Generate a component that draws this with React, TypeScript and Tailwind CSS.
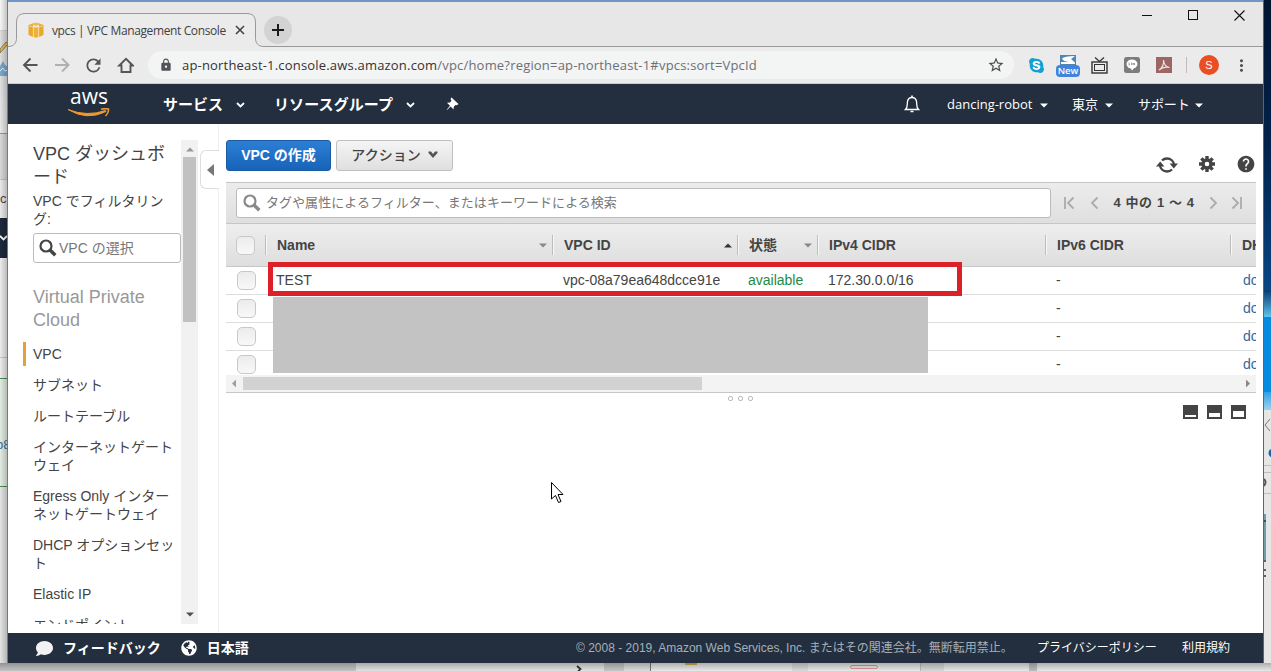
import type { ReactNode } from 'react';
import { FaComment, FaGlobeAmericas, FaSkype } from 'react-icons/fa';
import { MdLock, MdMoreVert, MdRefresh, MdStarBorder, MdHelp } from 'react-icons/md';

const SIDEBAR_ITEMS = [
  'サブネット',
  'ルートテーブル',
  'インターネットゲートウェイ',
  'Egress Only インターネットゲートウェイ',
  'DHCP オプションセット',
  'Elastic IP',
  'エンドポイント',
];

interface Vpc {
  name: string;
  id: string;
  state: string;
  ipv4: string;
  ipv6: string;
  dhcp: string;
}

const VPCS: Vpc[] = [
  { name: 'TEST', id: 'vpc-08a79ea648dcce91e', state: 'available', ipv4: '172.30.0.0/16', ipv6: '-', dhcp: 'dopt' },
  { name: '', id: '', state: '', ipv4: '', ipv6: '-', dhcp: 'dopt' },
  { name: '', id: '', state: '', ipv4: '', ipv6: '-', dhcp: 'dopt' },
  { name: '', id: '', state: '', ipv4: '', ipv6: '-', dhcp: 'dopt' },
];

const COLUMNS = [
  { label: 'Name', width: 'w-[287px]', sort: 'down' },
  { label: 'VPC ID', width: 'w-[185px]', sort: 'up' },
  { label: '状態', width: 'w-[80px]', sort: 'down' },
  { label: 'IPv4 CIDR', width: 'w-[228px]', sort: '' },
  { label: 'IPv6 CIDR', width: 'w-[185px]', sort: '' },
  { label: 'DHCP', width: 'w-[60px]', sort: '' },
];

const GEAR_TEETH = [0, 45, 90, 135];

function Caret({ className = '', up = false }: { className?: string; up?: boolean }) {
  return (
    <svg width="8" height="5" viewBox="0 0 8 5" className={`shrink-0 ${className}`}>
      <path d={up ? 'M0 4.5L4 0.5L8 4.5Z' : 'M0 0.5L4 4.5L8 0.5Z'} fill="currentColor" />
    </svg>
  );
}

function NavCaret({ className = '' }: { className?: string }) {
  return (
    <svg width="9" height="6" viewBox="0 0 9 6" className={`shrink-0 ${className}`}>
      <path d="M1 1L4.5 4.5L8 1" fill="none" stroke="currentColor" strokeWidth="1.8" />
    </svg>
  );
}

function SearchIcon({ size, className }: { size: number; className: string }) {
  return (
    <svg width={size} height={size} viewBox="0 0 18 18" className={`shrink-0 ${className}`}>
      <circle cx="7" cy="7" r="5.5" fill="none" stroke="currentColor" strokeWidth="2.2" />
      <path d="M11 11L16.3 16.3" stroke="currentColor" strokeWidth="3.4" />
    </svg>
  );
}

function Checkbox() {
  return (
    <span className="block size-[19px] shrink-0 rounded-[5px] border border-[#c8c8c8] bg-linear-to-b from-[#ececec] to-[#f8f8f8]" />
  );
}

function PageArrow({ back = false, end = false }: { back?: boolean; end?: boolean }) {
  return (
    <svg width="12" height="14" viewBox="0 0 12 14" className={back ? '' : 'rotate-180'}>
      <path d="M10.500 1.5L5 7L10.500 12.5" fill="none" stroke="#ababab" strokeWidth="1.8" />
      {end && <path d="M2 1V13" stroke="#ababab" strokeWidth="1.8" />}
    </svg>
  );
}

// Slivers of the windows that lie behind the browser on the left
function LeftDesktop() {
  return (
    <div className="relative w-2 shrink-0 overflow-hidden bg-[#ececec] text-[13px]">
      <div className="h-[31px] border-b border-[#cfcfcf] bg-[#f6f6f6]" />
      <svg width="8" height="46" viewBox="0 0 8 46" className="block bg-[#dedede]">
        <path d="M0 18L6 11L8 13L0 22Z" fill="#e5bd45" stroke="#746b4c" strokeWidth="0.8" />
        <path d="M0 35L3 30L5 34L8 36V45H0Z" fill="#79a8cc" />
        <path d="M0 40L3 37L5 40L8 39" fill="none" stroke="#e8f2fa" />
      </svg>
      <div className="h-[57px] border-b border-[#7a9dcc] bg-linear-to-b from-[#dedfe2] to-[#e9e9e9]" />
      <div className="h-[46px] border-b border-[#c0c0c0] bg-[#d8d8d8]" />
      <div className="h-[38px] bg-[#e9e9e9] pt-[9px] leading-5 text-[#444]">c</div>
      <div className="flex h-10 items-center bg-[#1d2a3b] text-white">
        <NavCaret className="-ml-px" />
      </div>
      <div className="h-[100px] border-b border-[#c8c8c8] bg-[#ececec]" />
      <div className="h-[21px] border-b border-[#4b8b54] bg-[#ececec]" />
      <div className="h-[108px] border-b border-[#4b8b54] bg-[#e2ece2] pt-[56px] leading-5 text-[#3c6e9c]">
        <span className="-ml-1">b8</span>
      </div>
      <div className="h-[176px] bg-[#e4e4e4]" />
      <div className="absolute inset-0 border-r border-[#77797c] bg-linear-to-r from-transparent to-black/20" />
    </div>
  );
}

function RightDesktop() {
  return (
    <div className="w-2 shrink-0 overflow-hidden border-l border-[#5b6470] bg-[#e6e6e6]">
      <div className="h-[290px] bg-linear-to-b from-[#011531] via-[#03224a] to-[#084685]" />
      <div className="h-[27px] bg-linear-to-b from-[#0a3c70] to-[#5fc5ee]" />
      <div className="h-[75px] bg-[#078be0]" />
      <div className="h-[18px] bg-linear-to-b from-[#2a9fe4] to-[#9bd3ee]" />
      <svg width="7" height="253" viewBox="0 0 7 253" className="block">
        <path d="M6 9L1 15L6 21" fill="none" stroke="#777" />
        <circle cx="9" cy="43" r="4.5" fill="#1b62a8" />
        <path d="M0 55.500H7M0 62.500H7M0 83.500H7" stroke="#bdbdbd" />
        <path d="M0 69Q3 72 0 76" fill="none" stroke="#555" strokeWidth="2" />
        <path d="M1 104V150" stroke="#6f9da8" strokeWidth="2" />
        <path d="M0 111H2M0 151H2M0 160H2M0 166H2" stroke="#333" strokeWidth="1.5" />
      </svg>
    </div>
  );
}

function BottomDesktop() {
  return (
    <div className="relative flex h-2 shrink-0 overflow-hidden bg-[#e8e8e8]">
      <div className="w-[356px] bg-[#c3c3c3]" />
      <div className="flex w-[248px] justify-end bg-[#e2e2e2] pr-[21px]">
        <svg width="7" height="8" viewBox="0 0 7 8">
          <path d="M1 3L4.500 6L1 9.500" fill="none" stroke="#333" strokeWidth="1.8" />
        </svg>
      </div>
      <div className="w-[20px] bg-[#c5c5c5]" />
      <div className="w-[27px] border-r border-[#777] bg-[#dcdcdc]" />
      <div className="w-[141px] pl-[34px]">
        <div className="h-[2px] w-3 bg-[#d2af4b]" />
      </div>
      <div className="w-[16px] bg-[#dadada]" />
      <div className="w-[112px] pt-0.5 pl-[42px]">
        <div className="h-1 w-[28px] rounded-sm border border-[#d99696]" />
      </div>
      <div className="w-[24px] border-l border-[#bbb] bg-[#d7d7d7]" />
      <div className="w-[93px] border-r-8 border-[#bcbcbc]" />
      <div className="absolute inset-0 bg-linear-to-b from-black/25 to-transparent" />
    </div>
  );
}

function TabStrip() {
  return (
    <div className="relative flex h-[47px] justify-between border-t-2 border-[#7096c7] bg-[#e7e7e7]">
      <svg width="1255" height="47" viewBox="0 0 1255 47" className="absolute top-[-2px] left-0">
        <path
          d="M0 46.500C6 46.500 8.500 43 8.500 38V22Q8.500 13.500 17 13.500H239Q247.500 13.500 247.500 22V38C247.500 43 250 46.500 256 46.500H1255V60H0Z"
          fill="#ebebeb"
        />
        <path
          d="M0 46.500C6 46.500 8.500 43 8.500 38V22Q8.500 13.500 17 13.500H239Q247.500 13.500 247.500 22V38C247.500 43 250 46.500 256 46.500H1255"
          fill="none"
          stroke="#999"
        />
      </svg>
      <div className="relative mb-[3px] flex h-7 items-center self-end pl-5">
        <svg width="16" height="16" viewBox="0 0 16 16" className="mr-2">
          <path d="M0.500 3L5 1.500V15L0.500 13Z" fill="#e8a92f" />
          <path d="M15.500 3L11 1.500V15L15.500 13Z" fill="#e8a92f" />
          <path d="M3 2L8 0.500L13 2L8 4Z" fill="#f0bb4c" />
          <path d="M5.500 5H10.500V15L8 15.700L5.500 15Z" fill="#f2b130" />
          <path d="M1 4L8 5.300L15 4M5.300 5V15M10.700 5V15" fill="none" stroke="#fbe2a8" strokeWidth="0.7" />
        </svg>
        <span className="w-[180px] whitespace-nowrap pt-px font-['Open_Sans'] text-[12px] tracking-[-0.38px] text-[#3f3f3f]">
          vpcs | VPC Management Console
        </span>
        <svg width="10" height="10" viewBox="0 0 10 10" className="ml-[3px]">
          <path d="M1 1L9 9M9 1L1 9" stroke="#444" strokeWidth="1.6" />
        </svg>
        <span className="ml-[19px] flex size-7 items-center justify-center rounded-full bg-[#d3d3d3]">
          <svg width="12" height="12" viewBox="0 0 12 12">
            <path d="M6 0V12M0 6H12" stroke="#1a1a1a" strokeWidth="2" />
          </svg>
        </span>
      </div>
      <div className="relative mt-2 mr-[18px] flex h-[11px] items-center gap-9">
        <svg width="10" height="11" viewBox="0 0 10 11">
          <path d="M0 5.500H10" stroke="#111" />
        </svg>
        <svg width="10" height="11" viewBox="0 0 10 11">
          <rect x="0.500" y="0.500" width="9" height="9" fill="none" stroke="#111" />
        </svg>
        <svg width="11" height="11" viewBox="0 0 11 11">
          <path d="M0.500 0.500L10.500 10.500M10.500 0.500L0.500 10.500" stroke="#111" strokeWidth="1.1" />
        </svg>
      </div>
    </div>
  );
}

function AddressBar() {
  return (
    <div className="flex h-[37px] items-center border-b border-[#c9c9c9] bg-[#ebebeb]">
      <svg width="112" height="18" viewBox="0 0 112 18" className="ml-[14px] shrink-0" fill="none" strokeWidth="1.9">
        <path d="M15.500 9H2M8.500 2.500L2 9L8.500 15.500" stroke="#555" />
        <path d="M33 9H46.500M40 2.500L46.500 9L40 15.500" stroke="#b0b0b0" />
        <path d="M97.200 9.500H99.500V16H108.500V9.500H110.800L104 2.800Z" stroke="#555" />
      </svg>
      <MdRefresh className="-ml-[51px] size-[21px] shrink-0 text-[#555]" />
      <div className="ml-[44px] flex h-7 w-[866px] shrink-0 items-center rounded-full bg-[#f3f4f4] pr-[9px] pl-[11px]">
        <MdLock className="size-[14px] shrink-0 text-[#505357]" />
        <span className="ml-[9px] flex-1 whitespace-nowrap pt-0.5 font-['Open_Sans'] text-[13px] tracking-[0.19px] text-[#6c7075]">
          <span className="text-[#333]">ap-northeast-1.console.aws.amazon.com</span>
          /vpc/home?region=ap-northeast-1#vpcs:sort=VpcId
        </span>
        <MdStarBorder className="size-[18px] text-[#4c4c4c]" />
      </div>
      <span className="ml-[14px] flex size-4 shrink-0 items-center justify-center">
        <svg width="16" height="16" viewBox="0 0 16 16" className="absolute">
          <circle cx="8" cy="8" r="5" fill="#fff" />
        </svg>
        <FaSkype className="relative size-[17px] shrink-0 text-[#169fd2]" />
      </span>
      <span className="relative ml-[12px] block h-[24px] w-6 shrink-0">
        <svg width="24" height="24" viewBox="0 0 24 24">
          <rect x="4" y="2" width="16" height="11" fill="#4d86b8" />
          <path d="M6 5.500Q8 3 19 3L15 6L19 9.500V11H5V9H13Q7 8.500 6 5.500Z" fill="#fff" />
        </svg>
        <span className="absolute top-3 left-0 flex h-[12px] w-6 items-center justify-center rounded-sm bg-[#4184dc] font-['Open_Sans'] text-[9.5px] font-semibold text-white">
          New
        </span>
      </span>
      <svg width="18" height="17" viewBox="0 0 18 17" className="ml-[11px] shrink-0" fill="none" stroke="#333">
        <path d="M4 0.500L8.500 4.500L13 0.500" strokeWidth="1.3" />
        <rect x="1" y="5" width="15" height="11" strokeWidth="1.4" />
        <rect x="3.500" y="7.500" width="10" height="6" />
      </svg>
      <svg width="16" height="16" viewBox="0 0 16 16" className="ml-[15px] shrink-0">
        <rect width="16" height="16" rx="2.5" fill="#7c7c7c" />
        <ellipse cx="8" cy="7" rx="5.500" ry="4.500" fill="#fff" />
        <path d="M6 10H11L8 13.500Z" fill="#fff" />
        <path d="M5 5.500V8H6M7.500 5.500V8M9 8V6L10.500 8V6" fill="none" stroke="#7c7c7c" strokeWidth="0.7" />
      </svg>
      <svg width="16" height="16" viewBox="0 0 16 16" className="ml-4 shrink-0">
        <rect width="16" height="16" fill="#9b6664" />
        <path d="M3 13C6 11 8 7 7.500 3C8 8 10 10 13.500 10.500C10 9.500 6 10.500 3 13Z" fill="none" stroke="#f0dfde" strokeWidth="1.2" />
      </svg>
      <span className="ml-[14px] h-4 w-px shrink-0 bg-[#c5b9b6]" />
      <span className="ml-3 flex size-5 shrink-0 items-center justify-center rounded-full bg-[#ea4f23] text-[11px] text-white">
        S
      </span>
      <MdMoreVert className="ml-[13px] size-[19px] shrink-0 text-[#505050]" />
    </div>
  );
}

function AwsHeader() {
  return (
    <header className="flex h-10 items-center bg-[#232f3e] font-['Open_Sans','Noto_Sans_CJK_JP',sans-serif] text-white">
      <div className="ml-[59px] flex h-8 w-[44px] flex-col items-center">
        <span className="-mt-[3px] h-[23px] font-['Open_Sans'] text-[21px] leading-[23px] font-medium">aws</span>
        <svg width="44" height="10" viewBox="0 0 44 10" className="shrink-0">
          <path d="M1 1.500Q20 13 39 3.500L38.500 2.500Q20 9 1 1.500Z" fill="#f09a2d" stroke="#f09a2d" />
          <path d="M34 1.300Q38 0.200 41.500 1Q42 4.500 38.500 8" fill="none" stroke="#f09a2d" strokeWidth="1.5" />
        </svg>
      </div>
      <span className="ml-[52px] text-[15px] font-bold">サービス</span>
      <NavCaret className="mt-0.5 ml-[13px]" />
      <span className="ml-[29px] text-[15px] font-bold tracking-[0.1px]">リソースグループ</span>
      <NavCaret className="mt-0.5 ml-[13px]" />
      <svg width="14" height="14" viewBox="0 0 14 14" className="ml-[31px]">
        <path d="M5.500 0.500L12.500 7L11 8.200L9.500 8L7.800 9.800L7.500 12.500L4.700 9.500L1 13L0.800 12.500L4 8.700L1 5.800L4 5.500L5.500 3.800L4.500 2Z" fill="#fff" />
      </svg>
      <div className="ml-auto flex items-center pr-[60px] text-[13px]">
        <svg width="16" height="18" viewBox="0 0 16 18" className="mr-[27px]" fill="none" stroke="#fff" strokeWidth="1.3">
          <path d="M1.500 14.500H14.500C12 12 13 9 12.500 6.500C12 3.500 10 2.500 8 2.500S4 3.500 3.500 6.500C3 9 4 12 1.500 14.500Z" />
          <path d="M8 0.500V2.500M6.500 16.500H9.500" strokeWidth="1.6" />
        </svg>
        <span className="w-[93px] whitespace-nowrap pt-px">dancing-robot</span>
        <Caret className="mt-0.5" />
        <span className="ml-[24px] w-[33px] pt-px">東京</span>
        <Caret className="mt-0.5" />
        <span className="ml-[25px] w-[57px] pt-px tracking-[-0.1px]">サポート</span>
        <Caret className="mt-0.5" />
      </div>
    </header>
  );
}

function Sidebar() {
  return (
    <aside className="mt-4 flex h-[484px] w-[190px] shrink-0 overflow-hidden">
      <div className="w-[173px] pl-[15px] text-sm leading-[18px] text-[#444]">
        <h2 className="pt-[3px] pl-[10px] text-[18px] leading-[23px]">VPC ダッシュボード</h2>
        <p className="mt-[3px] w-[145px] pl-[10px]">VPC でフィルタリング:</p>
        <div className="mt-[5px] ml-[10px] flex h-[30px] w-[148px] items-center gap-[2px] rounded-[3px] border border-[#bbb] bg-white pl-[5px] whitespace-nowrap text-[#777]">
          <SearchIcon size={18} className="text-[#444]" />
          VPC の選択
        </div>
        <h3 className="mt-[23px] pl-[10px] text-[18px] leading-[23px] text-[#999]">Virtual Private Cloud</h3>
        <ul className="mt-[10px]">
          <li className="flex h-6 items-center border-l-[3px] border-[#e5a039] pl-[7px]">VPC</li>
          {SIDEBAR_ITEMS.map((item, i) => (
            <li key={item} className={`pl-[10px] break-all ${i === 0 ? 'mt-[10px]' : 'mt-[13px]'}`}>
              {item}
            </li>
          ))}
        </ul>
      </div>
      <div className="flex w-[17px] flex-col items-center bg-[#f1f1f1] py-[7px]">
        <Caret up className="text-[#999]" />
        <div className="mt-[5px] h-[165px] w-[13px] bg-[#c1c1c1]" />
        <Caret className="mt-auto text-[#505050]" />
      </div>
    </aside>
  );
}

function ToolbarIcons() {
  return (
    <div className="mt-[14px] flex items-center text-[#444]">
      <svg width="22" height="18" viewBox="0 0 22 18" className="mt-0.5 mr-[21px]" fill="none" stroke="currentColor">
        <path d="M18 9C18 5 14.500 2.500 11 2.500C9 2.500 7.500 3 6 4.500M4 9C4 13 7.500 15.500 11 15.500C13 15.500 14.500 15 16 13.500" strokeWidth="2.3" />
        <path d="M0 10.500H8.400L4.200 5.500ZM13.600 7.500H22L17.800 12.500Z" fill="currentColor" stroke="none" />
      </svg>
      <svg width="16" height="16" viewBox="0 0 16 16" className="mr-[21px]">
        <circle cx="8" cy="8" r="4" fill="none" stroke="currentColor" strokeWidth="3.4" />
        {GEAR_TEETH.map((angle) => (
          <path
            key={angle}
            d="M8 0V3.500M8 12.500V16"
            stroke="currentColor"
            strokeWidth="3.4"
            transform={`rotate(${angle} 8 8)`}
          />
        ))}
      </svg>
      <MdHelp className="size-5" />
    </div>
  );
}

function Cell({ width, children, className = '' }: { width: string; children?: ReactNode; className?: string }) {
  return <div className={`shrink-0 overflow-hidden pb-0.5 pl-[10px] ${width} ${className}`}>{children}</div>;
}

function VpcTable() {
  return (
    <div className="relative">
      <div className="flex h-[42px] items-center border-y border-[#c6c6c6] bg-linear-to-b from-[#ececec] to-[#dfdfdf] pl-[10px]">
        <div className="flex h-[30px] w-[815px] items-center gap-[5px] rounded-[3px] border border-[#bbb] bg-white pl-1.5 text-[13px] tracking-[0.04px] text-[#777]">
          <SearchIcon size={18} className="text-[#888]" />
          タグや属性によるフィルター、またはキーワードによる検索
        </div>
        <div className="ml-[12px] flex items-center text-[13px] font-bold text-[#444]">
          <PageArrow back end />
          <span className="w-[12px]" />
          <PageArrow back />
          <span className="mx-[13px] w-[84px] text-center whitespace-nowrap tracking-[0.6px]">4 中の 1 ～ 4</span>
          <PageArrow />
          <span className="w-[10px]" />
          <PageArrow end />
        </div>
      </div>
      <div className="flex h-[43px] items-center overflow-hidden border-b border-[#c6c6c6] bg-linear-to-b from-[#eeeeee] to-[#dedede] text-sm font-bold text-[#444]">
        <div className="flex w-[39px] shrink-0 pl-[10px]">
          <Checkbox />
        </div>
        {COLUMNS.map((col) => (
          <div
            key={col.label}
            className={`flex h-5 shrink-0 items-center justify-between border-l border-[#bcbcbc] pr-[5px] pl-[11px] shadow-[inset_1px_0_0_#f8f8f8] ${col.width}`}
          >
            {col.label}
            {col.sort && <Caret up={col.sort === 'up'} className={col.sort === 'up' ? 'text-[#333]' : 'text-[#888]'} />}
          </div>
        ))}
      </div>
      <div className="h-[108px] overflow-hidden bg-white">
        {VPCS.map((vpc, i) => (
          <div key={i} className="flex h-7 items-center overflow-hidden border-b border-[#ddd] text-sm text-[#444]">
            <div className="flex w-[40px] shrink-0 pl-[11px]">
              <Checkbox />
            </div>
            <Cell width="w-[287px]">{vpc.name}</Cell>
            <Cell width="w-[185px]">{vpc.id}</Cell>
            <Cell width="w-[80px]" className="text-[#1d8b42]">{vpc.state}</Cell>
            <Cell width="w-[228px]">{vpc.ipv4}</Cell>
            <Cell width="w-[187px]">{vpc.ipv6}</Cell>
            <Cell width="w-[60px]" className="text-[#33679d]">{vpc.dhcp}</Cell>
          </div>
        ))}
      </div>
      <div className="flex h-[18px] items-center border-b border-[#c6c6c6] bg-[#f3f3f3] px-1">
        <Caret className="rotate-90 text-[#a0a0a0]" />
        <div className="ml-[5px] h-[13px] w-[459px] bg-[#d2d2d2]" />
        <Caret className="ml-auto -rotate-90 text-[#888]" />
      </div>
      {/* Highlight around the new VPC and mask over the other ones */}
      <div className="absolute top-[115px] left-[47px] h-[76px] w-[655px] bg-[#c3c3c3]" />
      <div className="absolute top-20 left-[42px] h-[34px] w-[694px] border-[5px] border-[#dc2028]" />
    </div>
  );
}

function PaneIcon({ top }: { top: number }) {
  return (
    <svg width="15" height="14" viewBox="0 0 15 14">
      <rect width="15" height="14" fill="#444" />
      <rect x="2" y={top} width="11" height={12 - top} fill="#fff" />
    </svg>
  );
}

export default function App() {
  return (
    <div className="relative flex h-[671px] w-[1271px] flex-col overflow-hidden font-['Liberation_Sans','Noto_Sans_CJK_JP',sans-serif]">
      <div className="flex h-[663px] shrink-0">
        <LeftDesktop />
        <div className="flex w-[1255px] shrink-0 flex-col bg-white">
          <TabStrip />
          <AddressBar />
          <AwsHeader />
          <div className="flex h-[509px] overflow-hidden">
            <Sidebar />
            <div className="w-[21px] shrink-0 border-r border-[#f0f0f0] pt-[26px] pl-[2px]">
              <div className="-mr-px flex h-[39px] items-center justify-center rounded-l-md border border-r-0 border-[#ddd] bg-white text-[#777]">
                <svg width="7" height="12" viewBox="0 0 7 12">
                  <path d="M7 0V12L0 6Z" fill="currentColor" />
                </svg>
              </div>
            </div>
            <main className="ml-[7px] w-[1030px] shrink-0">
              <div className="flex h-[58px] items-start justify-between pt-4">
                <div className="flex gap-[5px] text-sm">
                  <button className="h-[31px] w-[105px] rounded-[3px] border border-[#1b5ba6] bg-linear-to-b from-[#2c7fd6] to-[#1763b8] pb-0.5 font-bold whitespace-nowrap text-white">
                    VPC の作成
                  </button>
                  <button className="flex h-[31px] w-[117px] items-center justify-center gap-[7px] rounded-[3px] border border-[#c0c0c0] bg-linear-to-b from-[#f5f5f5] to-[#dfdfdf] pb-0.5 font-medium text-[#444]">
                    アクション
                    <svg width="10" height="8" viewBox="0 0 10 8">
                      <path d="M0.500 0.500H3L5 3L7 0.500H9.500V2L5 7L0.500 2Z" fill="#555" />
                    </svg>
                  </button>
                </div>
                <ToolbarIcons />
              </div>
              <VpcTable />
              <div className="flex h-[10px] items-center justify-center gap-[5px] pr-0.5">
                <span className="size-[5px] rounded-[2px] border border-[#bbb]" />
                <span className="size-[5px] rounded-[2px] border border-[#bbb]" />
                <span className="size-[5px] rounded-[2px] border border-[#bbb]" />
              </div>
              <div className="mt-[2px] flex justify-end gap-[9px] pr-[10px]">
                <PaneIcon top={10} />
                <PaneIcon top={8} />
                <PaneIcon top={6} />
              </div>
            </main>
          </div>
          <footer className="flex h-[30px] items-center bg-[#232f3e] text-xs text-white">
            <FaComment className="ml-7 size-[17px] text-[#f2f2f2]" />
            <span className="ml-[10px] text-sm font-bold">フィードバック</span>
            <FaGlobeAmericas className="ml-5 size-4" />
            <span className="ml-[10px] text-sm font-bold">日本語</span>
            <span className="ml-auto w-[461px] whitespace-nowrap text-[#a5afb8]">
              © 2008 - 2019, Amazon Web Services, Inc. またはその関連会社。無断転用禁止。
            </span>
            <span className="w-[145px]">プライバシーポリシー</span>
            <span className="w-[81px]">利用規約</span>
          </footer>
        </div>
        <RightDesktop />
      </div>
      <BottomDesktop />
      <svg width="13" height="22" viewBox="0 0 13 22" className="absolute top-[482px] left-[551px]">
        <path d="M0.500 0.500V17L4.500 13.500L7.500 20.500L10 19.500L7 12.500H12Z" fill="#fff" stroke="#000" />
      </svg>
    </div>
  );
}
